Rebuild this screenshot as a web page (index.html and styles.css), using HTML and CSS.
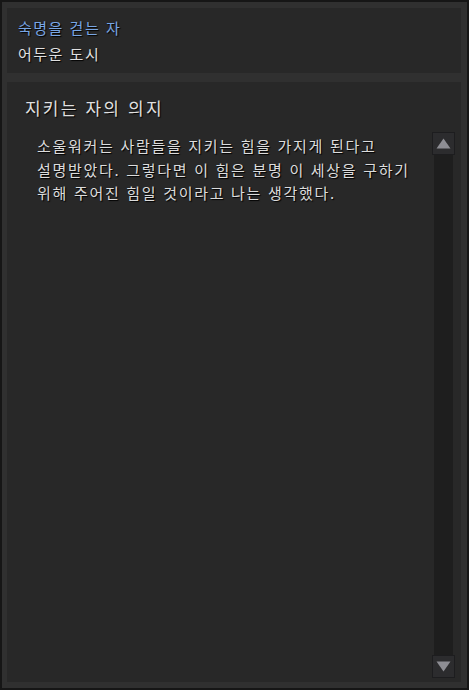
FILE: index.html
```html
<!DOCTYPE html>
<html lang="ko">
<head>
  <meta charset="UTF-8">
  <meta name="viewport" content="width=device-width, initial-scale=1.0">
  <title>숙명을 걷는 자</title>
  <link rel="stylesheet" href="styles.css">
</head>
<body>
  <div class="frame">
    <div class="quest-head">
      <div class="quest-title">숙명을 걷는 자</div>
      <div class="quest-place">어두운 도시</div>
    </div>

    <div class="quest-body">
      <h2>지키는 자의 의지</h2>
      <div class="scroll-row">
        <p class="story">소울워커는 사람들을 지키는 힘을 가지게 된다고 설명받았다. 그렇다면 이 힘은 분명 이 세상을 구하기 위해 주어진 힘일 것이라고 나는 생각했다.</p>
        <div class="scrollbar">
          <div class="scroll-btn">
            <svg width="15" height="11" viewBox="0 0 15 11"><polygon points="7.5,0.5 14.5,10.5 0.5,10.5" fill="#8d8d93"/></svg>
          </div>
          <div class="scroll-track"></div>
          <div class="scroll-btn">
            <svg width="15" height="11" viewBox="0 0 15 11"><polygon points="0.5,0.5 14.5,0.5 7.5,10.5" fill="#8d8d93"/></svg>
          </div>
        </div>
      </div>
    </div>
  </div>
</body>
</html>
```

FILE: styles.css
```css
body {
  margin: 0;
  background: #141414;
  font-family: "Noto Sans CJK KR", "Noto Sans", sans-serif;
}
.frame {
  width: 469px;
  height: 690px;
  box-sizing: border-box;
  border: 2px solid #161616;
  background: #303030;
  padding: 6px 6px 6px 5px;
  display: flex;
  flex-direction: column;
  gap: 9px;
}
.quest-head {
  height: 65px;
  box-sizing: border-box;
  background: #282828;
  padding: 7px 11px 0;
  font-size: 15px;
  line-height: 26px;
  letter-spacing: 1.5px;
  text-shadow: 1px 1px 1px #000;
}
.quest-title {
  color: #79a6e4;
}
.quest-place {
  color: #e0e0e0;
}
.quest-body {
  flex: 1;
  background: #282828;
  padding: 13px 6px 4px 18px;
  display: flex;
  flex-direction: column;
}
.quest-body h2 {
  margin: 0 0 11px;
  font-size: 17px;
  font-weight: normal;
  line-height: 26px;
  letter-spacing: 2.2px;
  color: #e0e0e0;
  text-shadow: 1px 1px 1px #000;
}
.scroll-row {
  flex: 1;
  display: flex;
}
.story {
  flex: 1;
  margin: 0;
  padding: 2px 4px 0 12px;
  font-size: 15px;
  line-height: 23.5px;
  letter-spacing: 1.7px;
  word-break: keep-all;
  color: #dcdcdc;
  text-shadow: 1px 1px 1px #000;
}
.scrollbar {
  width: 23px;
  display: flex;
  flex-direction: column;
}
.scroll-btn {
  height: 23px;
  box-sizing: border-box;
  background: #2c2c2e;
  border: 1px solid #1d1d1f;
  display: flex;
  align-items: center;
  justify-content: center;
}
.scroll-track {
  flex: 1;
  margin: 0 2px;
  background: #1e1e1e;
}
```
